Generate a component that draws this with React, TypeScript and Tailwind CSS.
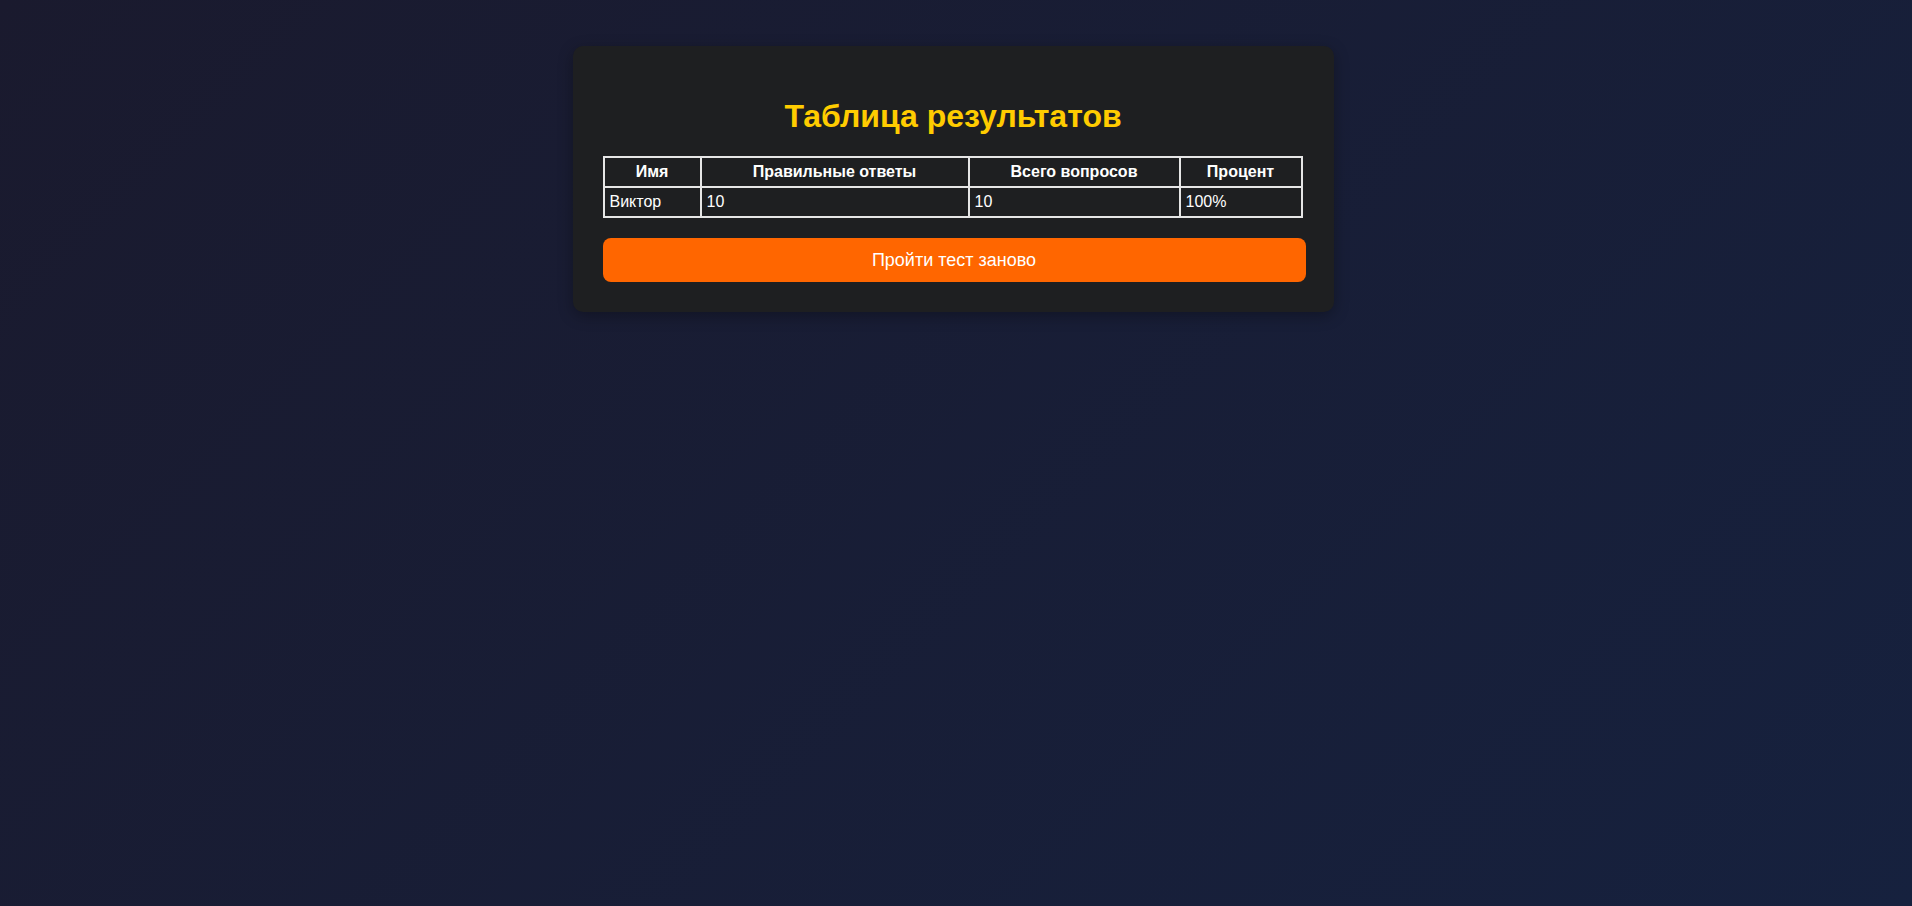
import React from "react";

export default function App() {
  const rows = [{ name: "Виктор", correct: "10", total: "10", pct: "100%" }];
  return (
    <div
      className="min-h-[906px] w-full bg-[linear-gradient(135deg,#1a1a2e,#16213e)] pt-[46px] pr-[6px] flex justify-center items-start"
      style={{ fontFamily: '"Liberation Sans", Arial, sans-serif' }}
    >
      <div className="w-[761px] bg-[#1e1f21] rounded-[10px] px-[30px] pt-[30px] pb-[30px] shadow-[0_4px_15px_rgba(0,0,0,0.3)]">
        <h1 className="text-center text-[32px] leading-[36.8px] font-bold text-[#ffcc00] mt-[22.4px] mb-[20.4px]">
          Таблица результатов
        </h1>
        <table className="w-[700px] border-collapse border-2 border-[#e6e6e6] text-white text-[16px] leading-[18.4px]">
          <thead>
            <tr>
              <th className="w-[97px] border-2 border-[#e6e6e6] px-[5px] py-[5px] font-bold text-center">Имя</th>
              <th className="w-[268px] border-2 border-[#e6e6e6] px-[5px] py-[5px] font-bold text-center">Правильные ответы</th>
              <th className="w-[211px] border-2 border-[#e6e6e6] px-[5px] py-[5px] font-bold text-center">Всего вопросов</th>
              <th className="border-2 border-[#e6e6e6] px-[5px] py-[5px] font-bold text-center">Процент</th>
            </tr>
          </thead>
          <tbody>
            {rows.map((r) => (
              <tr key={r.name}>
                <td className="border-2 border-[#e6e6e6] px-[5px] py-[5px] text-left">{r.name}</td>
                <td className="border-2 border-[#e6e6e6] px-[5px] py-[5px] text-left">{r.correct}</td>
                <td className="border-2 border-[#e6e6e6] px-[5px] py-[5px] text-left">{r.total}</td>
                <td className="border-2 border-[#e6e6e6] px-[5px] py-[5px] text-left">{r.pct}</td>
              </tr>
            ))}
          </tbody>
        </table>
        <button className="mt-[20px] w-[703px] h-[44px] rounded-[8px] bg-[#ff6600] text-white text-[18px] leading-[20px] text-center">
          Пройти тест заново
        </button>
      </div>
    </div>
  );
}
